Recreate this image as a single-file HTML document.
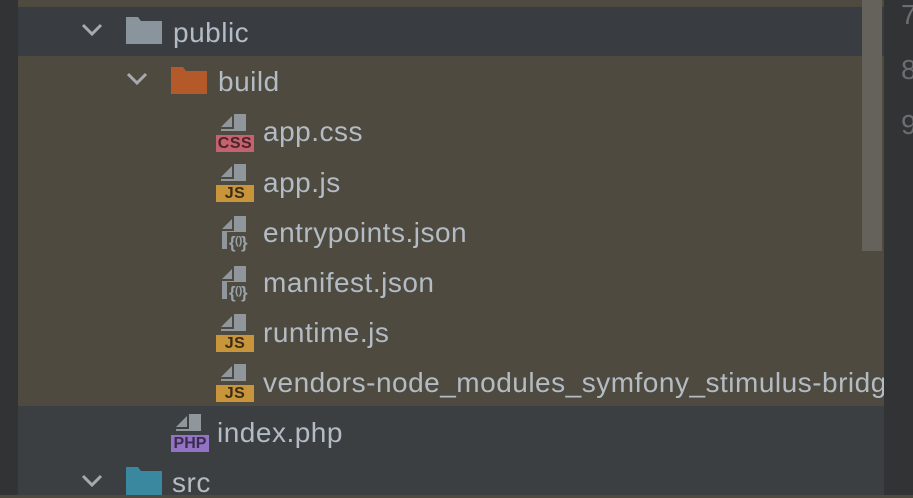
<!DOCTYPE html>
<html><head><meta charset="utf-8"><style>
body{margin:0;width:913px;height:495px;overflow:hidden;background:#4e4a3f;font-family:"Liberation Sans",sans-serif;position:relative}
.a{position:absolute}
.t{position:absolute;font-size:28px;letter-spacing:0.5px;color:#b3bcc4;line-height:30px;white-space:nowrap}
.badge{position:absolute;width:38px;height:17px;font-size:16px;font-weight:bold;line-height:18px;text-align:center;letter-spacing:0.5px}
</style></head><body>
<div class="a" style="left:0;top:0;width:18px;height:495px;background:#313335"></div>
<div class="a" style="left:18px;top:7px;width:866px;height:49px;background:#393c40"></div>
<div class="a" style="left:18px;top:406px;width:866px;height:89px;background:#3c3f41"></div>
<div class="a" style="left:884px;top:0;width:29px;height:495px;background:#313335"></div>
<div class="t" style="left:901px;top:0;color:#6b6e70">7</div>
<div class="t" style="left:901px;top:55px;color:#6b6e70">8</div>
<div class="t" style="left:901px;top:110px;color:#6b6e70">9</div>

<svg class="a" style="left:0;top:0" width="884" height="495">
<g fill="none" stroke="#a7aaad" stroke-width="3"><path d="M83 25l9 9 9-9"/><path d="M128 74l9 9 9-9"/><path d="M83 476l9 9 9-9"/></g>
<path d="M126 17h12l3 4h21v23h-36z" fill="#8a949c"/>
<path d="M171 67h12l3 4h21v23h-36z" fill="#b45a2a"/>
<path d="M126 467h12l3 4h21v28h-36z" fill="#3a87a0"/>
<g fill="#8f969c">
<g id="f"><path d="M221 127l11-11v11z"/><path d="M234 114h12v17h-25v-2h13z"/></g>
<use href="#f" y="50"/>
<use href="#f" y="200"/><use href="#f" y="250"/>
<use href="#f" x="-45" y="300"/>
<path d="M222 229l10-10v10z"/><path d="M234 216h12v33h-24v-18h12z"/>
<path d="M222 279l10-10v10z"/><path d="M234 266h12v33h-24v-18h12z"/>
</g>
<rect x="227" y="232" width="24" height="18" fill="#4e4a3f"/>
<rect x="227" y="282" width="24" height="18" fill="#4e4a3f"/>
<g font-family="Liberation Sans,sans-serif" font-size="17" font-weight="bold" fill="#9aa3aa"><text x="229" y="248">{</text><text x="235" y="244" font-size="11">()</text><text x="241" y="248">}</text>
<text x="229" y="298">{</text><text x="235" y="294" font-size="11">()</text><text x="241" y="298">}</text></g>
</svg>
<div class="a" style="left:862px;top:0;width:20px;height:251px;background:#65625b"></div>
<div class="badge" style="left:216px;top:135px;background:#c4626f;color:#4e2229">CSS</div>
<div class="badge" style="left:216px;top:185px;background:#c9953a;color:#3a2c16">JS</div>
<div class="badge" style="left:216px;top:335px;background:#c9953a;color:#3a2c16">JS</div>
<div class="badge" style="left:216px;top:385px;background:#c9953a;color:#3a2c16">JS</div>
<div class="badge" style="left:171px;top:435px;background:#9273c4;color:#3a2c4e;letter-spacing:0">PHP</div>

<div class="t" style="left:173px;top:18px">public</div>
<div class="t" style="left:218px;top:67px">build</div>
<div class="t" style="left:263px;top:117px">app.css</div>
<div class="t" style="left:263px;top:168px">app.js</div>
<div class="t" style="left:263px;top:218px">entrypoints.json</div>
<div class="t" style="left:263px;top:268px">manifest.json</div>
<div class="t" style="left:263px;top:318px">runtime.js</div>
<div class="t" style="left:263px;top:368px;width:621px;overflow:hidden">vendors-node_modules_symfony_stimulus-bridge</div>
<div class="t" style="left:217px;top:418px">index.php</div>
<div class="t" style="left:172px;top:468px">src</div>
</body></html>
